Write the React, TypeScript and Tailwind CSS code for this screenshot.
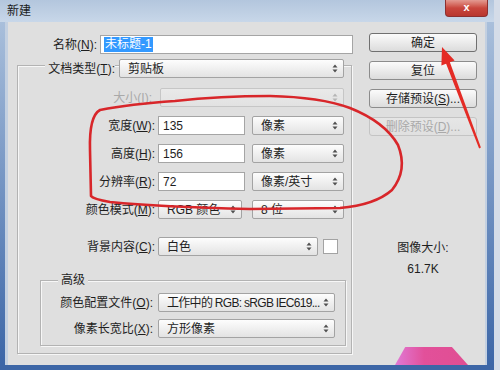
import clsx from "clsx";

const FONT = "font-['Liberation_Sans','Noto_Sans_CJK_SC',sans-serif]";

// underlined access key label, e.g. 名称(N):
function Label({ text, k, disabled, className }: { text: string; k: string; disabled?: boolean; className?: string }) {
  return (
    <div className={clsx("shrink-0 text-right text-[12px] leading-[14px] whitespace-nowrap", disabled ? "text-[#a9a9a9]" : "text-[#1e1e1e]", className)}>
      {text}(<span className="underline">{k}</span>):
    </div>
  );
}

function Arrows({ color = "#505050" }: { color?: string }) {
  return (
    <svg width="6" height="9" viewBox="0 0 6 9" className="shrink-0">
      <path d="M0.5 3.5L3 0.5L5.5 3.5Z M0.5 5.5L3 8.5L5.5 5.5Z" fill={color} />
    </svg>
  );
}

function Select({ text, className, disabled }: { text?: string; className: string; disabled?: boolean }) {
  return (
    <div
      className={clsx(
        "h-[19px] flex items-center justify-between pl-[8px] pr-[5px] border rounded-[2px] bg-linear-to-b text-[12px] leading-[14px] whitespace-nowrap",
        disabled ? "border-[#c6c6c6] from-[#e9e9e9] to-[#e2e2e2]" : "border-[#a3a3a3] from-[#fdfdfd] to-[#e3e3e3] text-[#1e1e1e]",
        className
      )}
    >
      <span>{text}</span>
      <Arrows color={disabled ? "#b5b5b5" : "#505050"} />
    </div>
  );
}

function Input({ value }: { value: string }) {
  return (
    <div className="w-[87px] h-[19px] flex items-center pl-[4px] border border-[#a5a5a5] bg-white text-[12px] leading-[14px] text-[#1e1e1e]">
      {value}
    </div>
  );
}

function Button({ children, disabled, primary }: { children: React.ReactNode; disabled?: boolean; primary?: boolean }) {
  return (
    <div
      className={clsx(
        "h-[19px] flex items-center justify-center border rounded-[3px] bg-linear-to-b text-[12px] leading-[14px]",
        disabled
          ? "border-[#c4c4c4] from-[#e6e6e6] to-[#e0e0e0] text-[#a9a9a9]"
          : primary
          ? "border-[#707070] from-[#fbfbfb] to-[#dcdcdc] text-[#1e1e1e]"
          : "border-[#8c8c8c] from-[#fbfbfb] to-[#dcdcdc] text-[#1e1e1e]"
      )}
    >
      {children}
    </div>
  );
}

export default function App() {
  return (
    <div className={clsx("relative w-[500px] h-[370px] overflow-hidden flex flex-col bg-[#d4dce8]", FONT)}>
      {/* ── Title bar ── */}
      <div className="h-[22px] w-[494px] flex items-start justify-between bg-linear-to-b from-[#b3c6dd] to-[#c8d7e9]">
        <div className="pl-[7px] pt-[4px] text-[12px] leading-[14px] text-[#1b1b1b]">新建</div>
        <div className="mr-[6px] w-[43px] h-[17px] flex items-center justify-center rounded-b-[4px] border border-t-0 border-[#8c3030] bg-linear-to-b from-[#e39a92] via-[#c9463d] to-[#b8372f] text-white text-[11px] font-bold leading-none pb-[2px]">
          x
        </div>
      </div>

      <div className="flex flex-1">
        {/* left frame */}
        <div className="flex">
          <div className="w-[5px] bg-linear-to-b from-[#a9bfdb] to-[#3c66a7]" />
          <div className="w-[3px] bg-[#c3d0e1]" />
        </div>

        {/* ── Dialog body ── */}
        <div className="w-[477px] flex flex-col bg-[#dfdfdf]">
          <div className="flex flex-1">
            {/* left column */}
            <div className="w-[361px] pt-[13px]">
              <div className="flex items-center gap-[3px]">
                <Label text="名称" k="N" className="w-[89px]" />
                <div className="w-[253px] h-[19px] flex items-center pl-[3px] border border-[#a5a5a5] bg-white">
                  <span className="bg-[#3399ff] text-white text-[12px] leading-[15px] px-[1px]">未标题-1</span>
                </div>
              </div>

              {/* outer group box */}
              <div className="ml-[9px] mt-[11px] w-[335px] border border-[#b3b3b3] shadow-[inset_1px_1px_0_#f7f7f7,1px_1px_0_#f7f7f7] pb-[7px]">
                <div className="-mt-[7px] flex items-center gap-[4px]">
                  <div className="w-[97px] flex justify-end">
                    <Label text="文档类型" k="T" className="bg-[#dfdfdf] pl-[3px]" />
                  </div>
                  <Select text="剪贴板" className="w-[225px]" />
                </div>

                <div className="mt-[10px] flex items-center gap-[8px]">
                  <Label text="大小" k="I" disabled className="w-[134px]" />
                  <Select disabled className="w-[184px]" />
                </div>

                {[
                  ["宽度", "W", "135", "像素"],
                  ["高度", "H", "156", "像素"],
                  ["分辨率", "R", "72", "像素/英寸"],
                ].map(([t, k, v, u]) => (
                  <div key={k} className="mt-[9px] flex items-center">
                    <Label text={t} k={k} className="w-[137px]" />
                    <div className="ml-[3px]">
                      <Input value={v} />
                    </div>
                    <Select text={u} className="ml-[7px] w-[92px]" />
                  </div>
                ))}

                <div className="mt-[9px] flex items-center">
                  <Label text="颜色模式" k="M" className="w-[137px]" />
                  <Select text="RGB 颜色" className="ml-[3px] w-[84px]" />
                  <Select text="8 位" className="ml-[10px] w-[92px]" />
                </div>

                <div className="mt-[18px] flex items-center">
                  <Label text="背景内容" k="C" className="w-[137px]" />
                  <Select text="白色" className="ml-[3px] w-[160px]" />
                  <div className="ml-[5px] w-[15px] h-[15px] bg-white border border-[#a3a3a3]" />
                </div>

                {/* advanced */}
                <div className="relative ml-[22px] mt-[24px] w-[306px] border border-[#b3b3b3] shadow-[inset_1px_1px_0_#f7f7f7,1px_1px_0_#f7f7f7] pt-[12px] pb-[7px]">
                  <span className="absolute -top-[8px] left-[17px] px-[3px] bg-[#dfdfdf] text-[12px] leading-[14px] text-[#1e1e1e]">高级</span>
                  <div className="flex items-center gap-[5px]">
                    <Label text="颜色配置文件" k="O" className="w-[112px]" />
                    <Select text="工作中的 RGB: sRGB IEC619..." className="w-[177px] tracking-[-0.7px]" />
                  </div>
                  <div className="mt-[7px] flex items-center gap-[5px]">
                    <Label text="像素长宽比" k="X" className="w-[112px]" />
                    <Select text="方形像素" className="w-[177px]" />
                  </div>
                </div>
              </div>
            </div>

            {/* right column */}
            <div className="w-[108px] pt-[11px] flex flex-col gap-[9px]">
              <Button primary>确定</Button>
              <Button>复位</Button>
              <Button>
                存储预设(<span className="underline">S</span>)...
              </Button>
              <Button disabled>
                删除预设(<span className="underline">D</span>)...
              </Button>
              <div className="mt-[96px] flex flex-col items-center text-[12px] leading-[14px] text-[#1e1e1e]">
                <div>图像大小:</div>
                <div className="mt-[7px]">61.7K</div>
              </div>
            </div>
          </div>
        </div>

        {/* right frame */}
        <div className="flex">
          <div className="w-[2px] bg-[#c3d0e1]" />
          <div className="w-[7px] bg-linear-to-b from-[#a9bfdb] to-[#3c66a7]" />
        </div>
      </div>
      <div className="h-[5px] w-[494px] bg-[#3d66a6]" />

      {/* watermark blob */}
      <div className="absolute left-[395px] top-[347px] w-[73px] h-[18px] bg-[linear-gradient(90deg,#e07ad6,#e2509a_40%,#e04e92)] [clip-path:polygon(14%_0,78%_0,100%_100%,0_100%)]" />

      {/* red annotations */}
      <svg className="absolute inset-0 pointer-events-none" width="500" height="370" viewBox="0 0 500 370">
        <path
          d="M91 196 L90 150 Q89 116 100 110 Q130 104 175 101 Q220 96 270 96 Q320 97 350 108 Q385 122 398 145 Q408 170 392 190 Q375 205 340 208 L250 209 Q160 207 110 202 Q93 199 91 196 Z"
          fill="none"
          stroke="#d8262a"
          strokeWidth="2.6"
          strokeLinejoin="round"
        />
        <polygon points="442,47 454.6,60.5 449.9,62.3 480.9,147.6 479.1,148.4 446.1,63.7 441.4,65.5" fill="#e42b25" />
      </svg>
    </div>
  );
}
